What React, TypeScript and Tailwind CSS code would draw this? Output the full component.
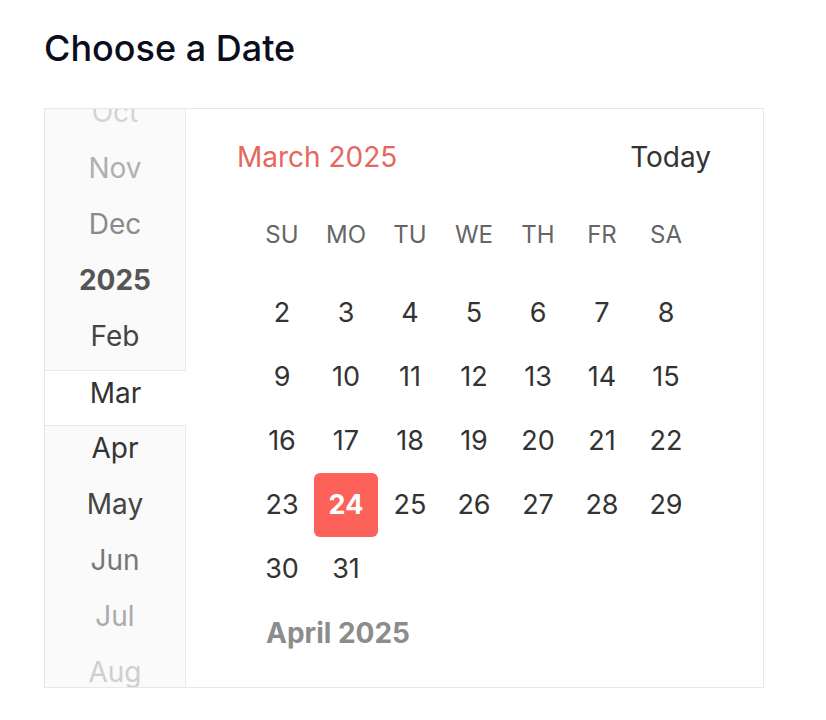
const months = [
  { label: 'Oct', cls: 'text-[#d4d4d4]' },
  { label: 'Nov', cls: 'text-[#b0b0b0]' },
  { label: 'Dec', cls: 'text-[#8a8a8a]' },
  { label: '2025', cls: 'text-[#555] font-bold' },
  { label: 'Feb', cls: 'text-[#444]' },
  { label: 'Mar', cls: 'text-[#333]', active: true },
  { label: 'Apr', cls: 'text-[#333]' },
  { label: 'May', cls: 'text-[#444]' },
  { label: 'Jun', cls: 'text-[#777]' },
  { label: 'Jul', cls: 'text-[#ababab]' },
  { label: 'Aug', cls: 'text-[#cfcfcf]' },
  { label: 'Sep', cls: 'text-[#e0e0e0]' }
]

const weekdays = ['SU', 'MO', 'TU', 'WE', 'TH', 'FR', 'SA']

const weeks = [
  [2, 3, 4, 5, 6, 7, 8],
  [9, 10, 11, 12, 13, 14, 15],
  [16, 17, 18, 19, 20, 21, 22],
  [23, 24, 25, 26, 27, 28, 29],
  [30, 31]
]

export default function App() {
  return (
    <div className="min-h-screen bg-white font-['Inter',sans-serif] pl-[44px] pt-[26px]">
      <h1 className="text-[36px] leading-[44px] text-[#0b0d1c] font-medium">Choose a Date</h1>

      <div className="mt-[38px] flex w-[720px] h-[580px] border border-[#e8e8e8] overflow-hidden">
        {/* Month picker */}
        <div className="w-[141px] shrink-0 overflow-hidden">
          <div className="-mt-[19px] flex flex-col">
            {months.map((m) => (
              <div
                key={m.label}
                className={`h-14 shrink-0 text-center text-[28px] leading-[44px] ${m.cls} ${
                  m.active
                    ? 'bg-white border-y border-[#e8e8e8]'
                    : 'bg-[#fafafa] border-r border-[#ececec]'
                }`}
              >
                {m.label}
              </div>
            ))}
          </div>
        </div>

        {/* Calendar */}
        <div className="flex-1 flex flex-col pt-[30px]">
          <div className="flex items-center justify-between pl-[51px] pr-[52px] h-[36px]">
            <span className="text-[28px] text-[#e5675d]">March 2025</span>
            <span className="text-[28px] text-[#333]">Today</span>
          </div>

          <div className="ml-[64px] mt-[44px] grid grid-cols-[repeat(7,64px)]">
            {weekdays.map((d) => (
              <div key={d} className="h-[32px] flex items-center justify-center text-[24px] text-[#666]">
                {d}
              </div>
            ))}
          </div>

          <div className="ml-[64px] mt-[30px] flex flex-col">
            {weeks.map((w, i) => (
              <div key={i} className="grid grid-cols-[repeat(7,64px)]">
                {w.map((d) => (
                  <div
                    key={d}
                    className={`h-16 flex items-center justify-center text-[27px] ${
                      d === 24 ? 'bg-[#fd625a] text-white font-bold rounded-md' : 'text-[#333]'
                    }`}
                  >
                    {d}
                  </div>
                ))}
              </div>
            ))}
          </div>

          <div className="pl-[80px] mt-[16px] text-[28px] font-bold text-[#8c8c8c] leading-[32px]">April 2025</div>
        </div>
      </div>
    </div>
  )
}
